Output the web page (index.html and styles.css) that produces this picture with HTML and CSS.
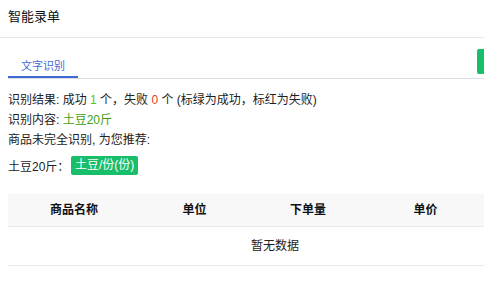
FILE: index.html
```html
<!DOCTYPE html>
<html lang="zh-CN">

<head>
  <meta charset="UTF-8">
  <meta name="viewport" content="width=device-width, initial-scale=1.0">
  <title>智能录单</title>
  <link rel="stylesheet" href="styles.css">
</head>

<body>
  <div class="header">智能录单</div>

  <div class="page">
    <div class="tab-bar">
      <div class="tab active">文字识别</div>
      <div class="side-tag"></div>
    </div>

    <div class="result">
      <div class="line">识别结果: 成功 <span class="ok">1</span> 个，失败 <span class="fail">0</span> 个 (标绿为成功，标红为失败)</div>
      <div class="line">识别内容: <span class="found">土豆20斤</span></div>
      <div class="line">商品未完全识别, 为您推荐:</div>
      <div class="suggest">
        <span class="suggest-label">土豆20斤：</span>
        <button class="btn-tag" type="button">土豆/份(份)</button>
      </div>
    </div>

    <div class="table">
      <div class="table-head">
        <div class="cell">商品名称</div>
        <div class="cell">单位</div>
        <div class="cell">下单量</div>
        <div class="cell">单价</div>
      </div>
      <div class="table-empty">暂无数据</div>
    </div>
  </div>
</body>

</html>
```

FILE: styles.css
```css
/* 智能录单 */
body {
  margin: 0;
  font-family: "Liberation Sans", "Noto Sans CJK SC", sans-serif;
  font-size: 12px;
  color: #222;
  background-color: #fff;
}

.header {
  height: 37px;
  line-height: 33px;
  padding-left: 8px;
  font-size: 13px;
  color: #111;
  border-bottom: 1px solid #e8e8e8;
}

.page {
  padding-left: 8px;
}

/* tabs */
.tab-bar {
  display: flex;
  height: 40px;
  border-bottom: 1px solid #dcdee2;
}

.tab {
  width: 70px;
  box-sizing: border-box;
  padding-top: 19px;
  padding-bottom: 1px;
  line-height: 18px;
  font-size: 11px;
  text-align: center;
}

.tab.active {
  color: #3f6ad8;
  border-bottom: 2px solid #3f6ad8;
}

.side-tag {
  margin-left: auto;
  margin-top: 11px;
  width: 7px;
  height: 25px;
  border-radius: 2px 0 0 2px;
  background-color: #19be6b;
}

/* 识别结果 */
.result {
  margin-top: 11px;
}

.line {
  line-height: 20px;
  height: 20px;
}

.ok {
  color: #52c41a;
}

.fail {
  color: #e2421f;
}

.found {
  color: #3ea012;
}

.suggest {
  display: flex;
  align-items: center;
  height: 20px;
  margin-top: 5px;
}

.suggest-label {
  width: 63px;
}

.btn-tag {
  height: 19px;
  padding: 0 4px;
  border: none;
  border-radius: 2px;
  background-color: #19be6b;
  color: #fff;
  font-family: inherit;
  font-size: 12px;
  line-height: 19px;
}

/* 表格 */
.table {
  margin-top: 19px;
  border-bottom: 1px solid #e8eaec;
}

.table-head {
  display: grid;
  grid-template-columns: 132px 109px 118px 1fr;
  height: 32px;
  background-color: #f8f8f9;
  border-bottom: 1px solid #e8eaec;
}

.cell {
  line-height: 32px;
  text-align: center;
  font-weight: bold;
  color: #111;
}

.table-empty {
  height: 38px;
  line-height: 38px;
  padding-left: 58px;
  text-align: center;
  color: #222;
}
```
